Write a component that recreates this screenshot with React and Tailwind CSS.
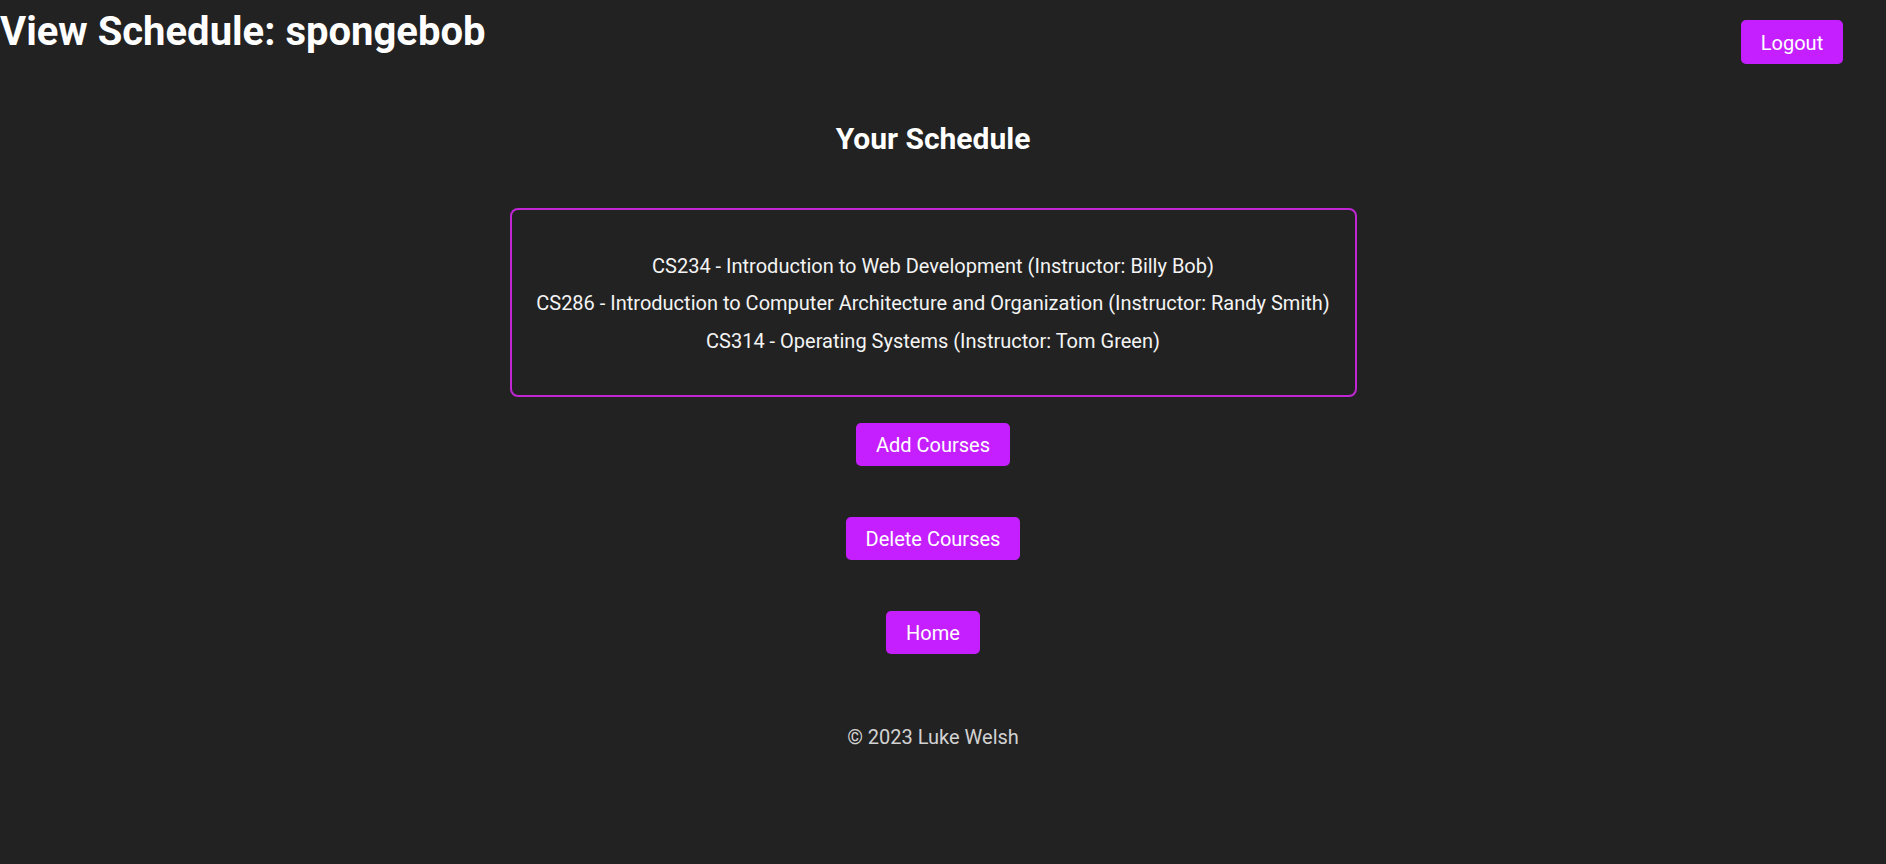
import React from "react";

const btn =
  "h-[43px] rounded-[5px] bg-[#c51fff] pt-[2px] text-[20px] leading-[23px] text-white";

export default function App() {
  return (
    <div className="min-h-screen w-full bg-[#222222] font-['Roboto',sans-serif] text-white">
      <div className="w-[1866px]">
        <header className="flex items-start justify-between">
          <h1 className="mt-[8px] text-[40px] font-bold leading-[47px]">
            View Schedule: spongebob
          </h1>
          <button className="mr-[23px] mt-[20px] h-[44px] w-[102px] rounded-[5px] bg-[#c51fff] pt-[1px] text-[20px] text-white">
            Logout
          </button>
        </header>
        <main className="flex flex-col items-center">
          <h2 className="mt-[57px] text-[30px] font-bold leading-[35px]">
            Your Schedule
          </h2>
          <div className="mt-[52px] flex h-[189px] w-[847px] flex-col items-center justify-center gap-[14px] rounded-lg border-2 border-[#c026d3] pt-[3px] text-[20px] leading-[23.5px] text-[#f4f4f4]">
            <p>CS234 - Introduction to Web Development (Instructor: Billy Bob)</p>
            <p>
              CS286 - Introduction to Computer Architecture and Organization
              (Instructor: Randy Smith)
            </p>
            <p>CS314 - Operating Systems (Instructor: Tom Green)</p>
          </div>
          <button className={`mt-[26px] w-[154px] ${btn}`}>Add Courses</button>
          <button className={`mt-[51px] w-[174px] ${btn}`}>Delete Courses</button>
          <button className={`mt-[51px] w-[94px] ${btn}`}>Home</button>
          <footer className="mt-[72px] text-[20px] leading-[23.5px] text-[#d2d2d2]">
            © 2023 Luke Welsh
          </footer>
        </main>
      </div>
    </div>
  );
}
